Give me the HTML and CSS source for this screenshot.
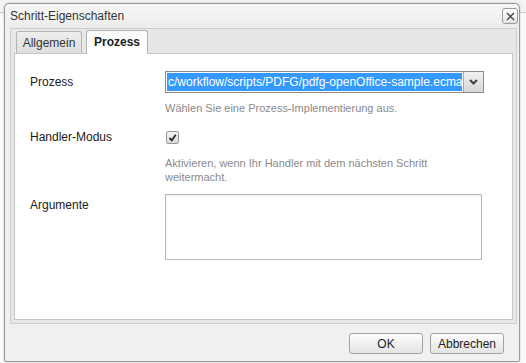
FILE: index.html
```html
<!DOCTYPE html>
<html lang="de">
<head>
  <meta charset="UTF-8" />
  <title>Schritt-Eigenschaften</title>
  <link rel="stylesheet" href="styles.css">
</head>
<body>
  <div class="dialog">
    <div class="titlebar">
      <span class="title">Schritt-Eigenschaften</span>
      <button class="close-btn" type="button">
        <svg width="9" height="9" viewBox="0 0 9 9">
          <path d="M1 1 L8 8 M8 1 L1 8" stroke="#4a4a4a" stroke-width="1.4" fill="none"/>
        </svg>
      </button>
    </div>

    <div class="tabpanel">
      <div class="tabs">
        <div class="tab">Allgemein</div>
        <div class="tab active">Prozess</div>
      </div>
      <div class="tab-body">
        <div class="field">
          <label class="field-label label-select">Prozess</label>
          <div class="control">
            <div class="select">
              <span class="select-value"><span class="selected">c/workflow/scripts/PDFG/pdfg-openOffice-sample.ecma</span></span>
              <span class="select-arrow">
                <svg width="9" height="6" viewBox="0 0 9 6">
                  <path d="M1 1 L4.5 4.5 L8 1" stroke="#404040" stroke-width="2" fill="none"/>
                </svg>
              </span>
            </div>
            <div class="hint hint-first">Wählen Sie eine Prozess-Implementierung aus.</div>
          </div>
        </div>

        <div class="field field-check">
          <label class="field-label">Handler-Modus</label>
          <div class="control">
            <span class="checkbox">
              <svg width="9" height="9" viewBox="0 0 9 9">
                <path d="M1.5 5 L3.8 7.3 L7.8 1.8" stroke="#2b2b2b" stroke-width="1.8" fill="none"/>
              </svg>
            </span>
            <div class="hint hint-check">Aktivieren, wenn Ihr Handler mit dem nächsten Schritt weitermacht.</div>
          </div>
        </div>

        <div class="field field-args">
          <label class="field-label label-args">Argumente</label>
          <div class="control">
            <div class="textarea"></div>
          </div>
        </div>
      </div>
    </div>

    <div class="footer">
      <button class="button" type="button">OK</button>
      <button class="button" type="button">Abbrechen</button>
    </div>
  </div>
</body>
</html>
```

FILE: styles.css
```css
body {
  margin: 0;
  padding: 0;
  font-family: "Liberation Sans", Arial, sans-serif;
  background: linear-gradient(#f3f3f3 0, #f3f3f3 12px, #cfcfcf 12px, #cfcfcf 13px, #fafafa 13px);
  height: 363px;
  overflow: hidden;
}
.dialog {
  box-sizing: border-box;
  width: 516px;
  height: 359px;
  margin: 3px 0 0 4px;
  border: 1px solid #9a9a9a;
  border-radius: 5px 5px 2px 2px;
  background: #f0f0f0;
  box-shadow: 0 0 2px rgba(0, 0, 0, 0.25);
  display: flex;
  flex-direction: column;
}
.titlebar {
  height: 24px;
  padding-left: 5px;
  padding-right: 1px;
  display: flex;
  align-items: center;
  justify-content: space-between;
  background: linear-gradient(#f7f7f7, #ececec);
  border-radius: 5px 5px 0 0;
}
.title {
  font-size: 12px;
  color: #333;
}
.close-btn {
  box-sizing: border-box;
  width: 16px;
  height: 16px;
  padding: 0;
  border: 1px solid #9c9c9c;
  border-radius: 3px;
  background: linear-gradient(#ffffff, #e4e4e4);
  display: flex;
  align-items: center;
  justify-content: center;
}

.tabpanel {
  margin: 0 2px 0 5px;
  border: 1px solid #cdcdcd;
  background: #e7e7e7;
  padding: 1px 3px 3px 3px;
}
.tabs {
  display: flex;
  gap: 4px;
  padding-left: 2px;
  height: 23px;
  align-items: flex-end;
}
.tab {
  box-sizing: border-box;
  width: 66px;
  height: 22px;
  border: 1px solid #b4b4b4;
  border-bottom: none;
  border-radius: 3px 3px 0 0;
  background: linear-gradient(#eeeeee, #dedede);
  font-size: 12px;
  color: #333;
  line-height: 22px;
  text-align: center;
}
.tab.active {
  width: 62px;
  height: 24px;
  margin-bottom: -1px;
  background: linear-gradient(#fbfbfb, #ffffff);
  font-weight: bold;
  color: #222;
  position: relative;
}
.tab-body {
  box-sizing: border-box;
  height: 267px;
  border: 1px solid #c6c6c6;
  background: white;
  padding: 17px 0 0 15px;
}

.field {
  display: flex;
}
.field-label {
  width: 135px;
  flex-shrink: 0;
  font-size: 12px;
  color: #1a1a1a;
  line-height: 14px;
}
.label-select {
  line-height: 22px;
}
.control {
  width: 319px;
}
.select {
  box-sizing: border-box;
  width: 319px;
  height: 22px;
  border: 1px solid #8a8a8a;
  display: flex;
  background: white;
}
.select-value {
  flex: 1;
  padding: 1px;
  overflow: hidden;
  white-space: nowrap;
}
.selected {
  display: block;
  height: 18px;
  background: #3399ff;
  color: white;
  font-size: 12px;
  line-height: 18px;
  padding-left: 1px;
}
.select-arrow {
  width: 19px;
  border-left: 1px solid #a8a8a8;
  background: linear-gradient(#f2f2f2, #d6d6d6);
  display: flex;
  align-items: center;
  justify-content: center;
}
.hint {
  font-size: 11px;
  line-height: 14px;
  color: #8a8a8a;
}
.hint-first {
  margin-top: 8px;
}
.field-check {
  margin-top: 15px;
}
.checkbox {
  box-sizing: border-box;
  display: flex;
  align-items: center;
  justify-content: center;
  width: 13px;
  height: 13px;
  margin: 1px 0 0 1px;
  border: 1px solid #9a9a9a;
  border-radius: 2px;
  background: linear-gradient(#f4f4f4, #d8d8d8);
}
.hint-check {
  margin-top: 12px;
}
.field-args {
  margin-top: 10px;
}
.label-args {
  padding-top: 4px;
}
.textarea {
  box-sizing: border-box;
  width: 317px;
  height: 66px;
  border: 1px solid #b9b9b9;
  box-shadow: inset 0 1px 2px rgba(0, 0, 0, 0.08);
}

.footer {
  flex: 1;
  display: flex;
  justify-content: flex-end;
  align-items: flex-start;
  gap: 7px;
  padding: 9px 15px 0 0;
}
.button {
  box-sizing: border-box;
  width: 74px;
  height: 21px;
  border: 1px solid #a3a3a3;
  border-radius: 3px;
  background: linear-gradient(#fdfdfd, #e4e4e4);
  font-family: "Liberation Sans", Arial, sans-serif;
  font-size: 12px;
  color: #222;
  padding: 0;
}
```
